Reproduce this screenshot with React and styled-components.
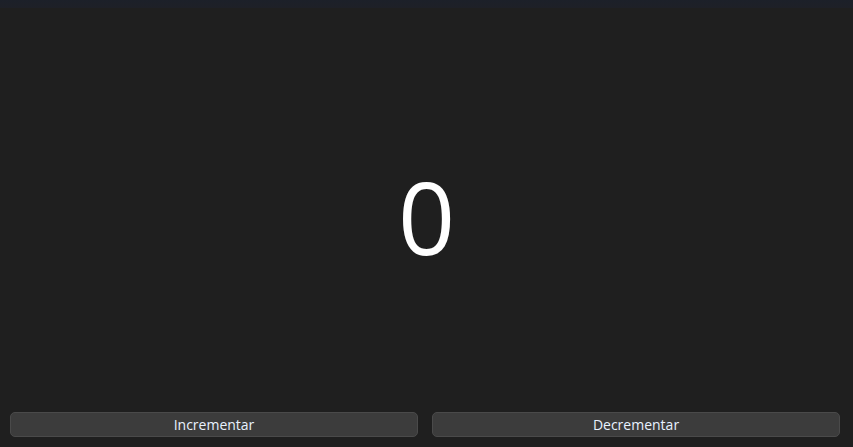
import React, { useState } from "react";
import styled, { createGlobalStyle } from "styled-components";

const GlobalStyle = createGlobalStyle`
  html, body {
    margin: 0;
    padding: 0;
    background-color: #1f1f1f;
  }
  #root {
    height: 100vh;
  }
`;

const StyledApp = styled.div`
  display: flex;
  flex-direction: column;
  height: 100%;
  background-color: #1f1f1f;
  font-family: "Open Sans", "Noto Sans", sans-serif;
`;

const StyledTopBar = styled.div`
  height: 8px;
  background: linear-gradient(#1c2029, #1e2027);
`;

const StyledDisplay = styled.div`
  flex: 1;
  display: flex;
  align-items: center;
  justify-content: center;
  padding-top: 12px;
`;

const StyledCount = styled.span`
  color: white;
  font-size: 100px;
  font-weight: 400;
  line-height: 1;
`;

const StyledActions = styled.div`
  display: flex;
  gap: 14px;
  padding: 0 13px 10px 10px;
`;

const StyledButton = styled.button`
  flex: 1;
  height: 25px;
  background-color: #3c3c3c;
  color: #e8f2ff;
  border: 1px solid #4a4a4a;
  border-radius: 5px;
  font-family: "Open Sans", "Noto Sans", sans-serif;
  font-size: 14px;
  padding: 0;
  cursor: pointer;
`;

function App() {
  const [count, setCount] = useState(0);

  return (
    <StyledApp>
      <GlobalStyle />
      <StyledTopBar />
      <StyledDisplay>
        <StyledCount>{count}</StyledCount>
      </StyledDisplay>
      <StyledActions>
        <StyledButton onClick={() => setCount(count + 1)}>Incrementar</StyledButton>
        <StyledButton onClick={() => setCount(count - 1)}>Decrementar</StyledButton>
      </StyledActions>
    </StyledApp>
  );
}

export default App;
